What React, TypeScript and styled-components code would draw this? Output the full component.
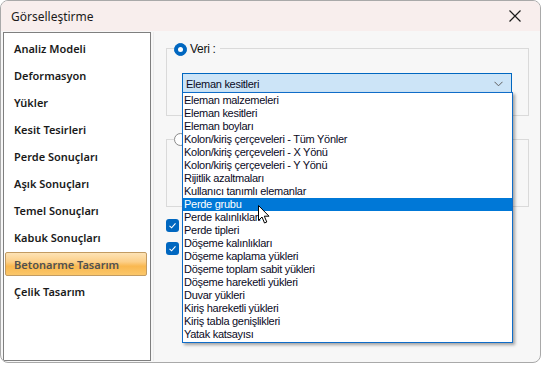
import styled, { createGlobalStyle } from "styled-components";

const GlobalStyle = createGlobalStyle`
  html, body {
    margin: 0;
    padding: 0;
    background: #ffffff;
  }
  * {
    box-sizing: border-box;
  }
`;

const Window = styled.div`
  position: relative;
  width: 541px;
  height: 363px;
  border: 1px solid #a9a9a9;
  border-radius: 8px;
  overflow: hidden;
  background: #f7f7f7;
  display: flex;
  flex-direction: column;
  font-family: "Noto Sans", "Liberation Sans", sans-serif;
`;

const TitleBar = styled.div`
  height: 30px;
  flex: none;
  display: flex;
  align-items: center;
  justify-content: space-between;
  padding: 0 0 0 10px;
  background: #f8eeed;
  font-size: 12px;
  color: #1b1b1b;
`;

const CloseButton = styled.div`
  width: 50px;
  height: 30px;
  display: flex;
  align-items: center;
  justify-content: center;
`;

const Body = styled.div`
  flex: 1;
  display: flex;
  padding: 1px 0 1px 2px;
`;

const NavPanel = styled.div`
  width: 148px;
  flex: none;
  background: #ffffff;
  border: 1px solid #7f7f7f;
  padding: 0 3px 0 1px;
  display: flex;
  flex-direction: column;
`;

const NavItem = styled.div<{ $active?: boolean }>`
  height: 24px;
  margin-top: 3px;
  padding-left: 8px;
  display: flex;
  align-items: center;
  font-size: 11px;
  font-weight: 600;
  color: ${(p) => (p.$active ? "#505050" : "#1a1a1a")};
  border: 1px solid ${(p) => (p.$active ? "#c29b62" : "transparent")};
  border-radius: 2px;
  background: ${(p) =>
    p.$active
      ? "linear-gradient(to bottom, #fde3b6 0%, #fccf88 40%, #f9b850 60%, #fbc76a 100%)"
      : "transparent"};
`;

const Splitter = styled.div`
  width: 3px;
  flex: none;
  border-right: 1px solid #ececec;
`;

const Content = styled.div`
  position: relative;
  flex: 1;
  padding: 16px 11px 0 12px;
  display: flex;
  flex-direction: column;
  font-family: "Liberation Sans", Arial, sans-serif;
  letter-spacing: -0.28px;
`;

const GroupBox = styled.div<{ $top: number }>`
  position: relative;
  height: 68px;
  margin-top: ${(p) => p.$top}px;
  border: 1px solid #dadada;
  padding: 24px 16px 0 15px;
`;

const Legend = styled.div`
  position: absolute;
  top: -7px;
  left: 7px;
  display: flex;
  align-items: center;
  gap: 3px;
  padding-right: 4px;
  background: #f7f7f7;
  font-size: 12px;
  color: #111;
  line-height: 14px;
`;

const Radio = styled.span<{ $checked?: boolean }>`
  width: 13px;
  height: 13px;
  border-radius: 50%;
  flex: none;
  background: ${(p) => (p.$checked ? "#0067c0" : "#ffffff")};
  border: 1px solid ${(p) => (p.$checked ? "#0067c0" : "#8a8a8a")};
  display: flex;
  align-items: center;
  justify-content: center;
  &::after {
    content: "";
    width: 5px;
    height: 5px;
    border-radius: 50%;
    background: ${(p) => (p.$checked ? "#ffffff" : "transparent")};
  }
`;

const Combo = styled.div`
  height: 21px;
  background: #cce4f7;
  border: 1px solid #0067c0;
  display: flex;
  align-items: center;
  justify-content: space-between;
  padding: 0 8px 0 3px;
  font-size: 11px;
  color: #0a0a1e;
`;

const CheckRow = styled.div<{ $top: number }>`
  margin-top: ${(p) => p.$top}px;
  display: flex;
`;

const CheckBox = styled.span`
  width: 13px;
  height: 13px;
  border-radius: 3px;
  background: #0067c0;
  display: flex;
  align-items: center;
  justify-content: center;
`;

const DropList = styled.div`
  position: absolute;
  left: 28px;
  top: 60px;
  width: 331px;
  height: 251px;
  padding-top: 1px;
  background: #ffffff;
  border: 1px solid #0f6cc8;
  box-shadow: 2px 2px 3px rgba(0, 0, 0, 0.35);
`;

const ListItem = styled.div<{ $active?: boolean }>`
  height: 13px;
  line-height: 13px;
  padding-left: 1px;
  font-size: 11px;
  white-space: nowrap;
  color: ${(p) => (p.$active ? "#ffffff" : "#0a0a1e")};
  background: ${(p) => (p.$active ? "#0078d7" : "transparent")};
`;

const Cursor = styled.svg`
  position: absolute;
  left: 104px;
  top: 173px;
`;

const navItems = [
  "Analiz Modeli",
  "Deformasyon",
  "Yükler",
  "Kesit Tesirleri",
  "Perde Sonuçları",
  "Aşık Sonuçları",
  "Temel Sonuçları",
  "Kabuk Sonuçları",
  "Betonarme Tasarım",
  "Çelik Tasarım",
];

const listItems = [
  "Eleman malzemeleri",
  "Eleman kesitleri",
  "Eleman boyları",
  "Kolon/kiriş çerçeveleri - Tüm Yönler",
  "Kolon/kiriş çerçeveleri - X Yönü",
  "Kolon/kiriş çerçeveleri - Y Yönü",
  "Rijitlik azaltmaları",
  "Kullanıcı tanımlı elemanlar",
  "Perde grubu",
  "Perde kalınlıkları",
  "Perde tipleri",
  "Döşeme kalınlıkları",
  "Döşeme kaplama yükleri",
  "Döşeme toplam sabit yükleri",
  "Döşeme hareketli yükleri",
  "Duvar yükleri",
  "Kiriş hareketli yükleri",
  "Kiriş tabla genişlikleri",
  "Yatak katsayısı",
];

const Check = () => (
  <svg width="9" height="9" viewBox="0 0 9 9">
    <path d="M1.5 4.8 L3.6 6.8 L7.5 2.4" fill="none" stroke="#fff" strokeWidth="1.1" />
  </svg>
);

const App = () => {
  return (
    <>
      <GlobalStyle />
      <Window>
        <TitleBar>
          <span>Görselleştirme</span>
          <CloseButton>
            <svg width="14" height="14" viewBox="0 0 14 14">
              <path d="M1.5 1.5 L12.5 12.5 M12.5 1.5 L1.5 12.5" stroke="#1b1b1b" strokeWidth="1.2" />
            </svg>
          </CloseButton>
        </TitleBar>
        <Body>
          <NavPanel>
            {navItems.map((item) => (
              <NavItem key={item} $active={item === "Betonarme Tasarım"}>
                {item}
              </NavItem>
            ))}
          </NavPanel>
          <Splitter />
          <Content>
            <GroupBox $top={0}>
              <Legend>
                <Radio $checked />
                Veri :
              </Legend>
              <Combo>
                <span>Eleman kesitleri</span>
                <svg width="9" height="6" viewBox="0 0 9 6">
                  <path d="M0.5 0.8 L4.5 4.8 L8.5 0.8" fill="none" stroke="#606060" strokeWidth="1" />
                </svg>
              </Combo>
            </GroupBox>
            <GroupBox $top={23}>
              <Legend>
                <Radio />
              </Legend>
            </GroupBox>
            <CheckRow $top={12}>
              <CheckBox>
                <Check />
              </CheckBox>
            </CheckRow>
            <CheckRow $top={10}>
              <CheckBox>
                <Check />
              </CheckBox>
            </CheckRow>
            <DropList>
              {listItems.map((item) => (
                <ListItem key={item} $active={item === "Perde grubu"}>
                  {item}
                </ListItem>
              ))}
            </DropList>
            <Cursor width="12" height="19" viewBox="0 0 12 19">
              <path
                d="M0.5 0.5 L0.5 15.5 L4 12 L6.5 18 L8.8 17 L6.3 11.2 L11 11.2 Z"
                fill="#ffffff"
                stroke="#000000"
                strokeWidth="1"
                strokeLinejoin="round"
              />
            </Cursor>
          </Content>
        </Body>
      </Window>
    </>
  );
};

export default App;
